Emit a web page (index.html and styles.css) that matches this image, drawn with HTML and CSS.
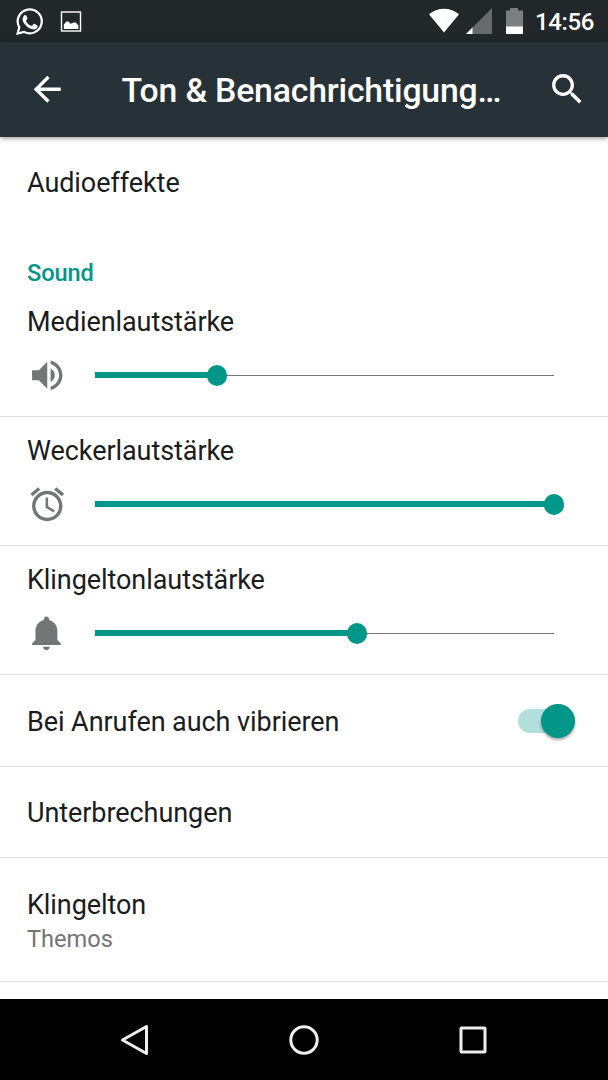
FILE: index.html
```html
<!DOCTYPE html>
<html lang="de">
<head>
<meta charset="utf-8">
<title>Ton &amp; Benachrichtigungen</title>
<link rel="stylesheet" href="styles.css">
</head>
<body>
<div class="screen">
  <div class="status-bar">
    <svg class="status-chat" viewBox="0 0 28 28" width="28" height="28">
      <path d="M1.600 25.500 3.300 19.300A12 12 0 1 1 8 23.900Z" fill="none" stroke="#fff" stroke-width="2.200"/>
      <path d="M8.500 7.300c.5-.5 1.400-.5 1.700.1l1.200 2.700c.2.6-.1 1-1.200 2.300-.3.4-.2.6 0 1 1.300 2.200 2.900 3.500 5.100 4.400.4.200.7.100 1-.2l1.300-1.500c.3-.4.600-.4 1-.2l2.600 1.300c.6.3.5 2.100-.4 3-1.400 1.300-3.300 1.500-5.300.8-3.700-1.200-6.300-3.700-8.100-6.800-1.200-2.300-1.100-4.900 1.100-6.900z" fill="#fff"/>
    </svg>
    <svg class="status-photo" viewBox="0 0 22 22" width="22" height="22">
      <rect x="1.500" y="1" width="19" height="19" fill="none" stroke="#fff" stroke-width="1.400"/>
      <path d="M3.800 18v-4.600l2.600-3h2l2.200 2.400 3.200-1.300h2l2.600 3V18z" fill="#fff"/>
    </svg>
    <div class="status-right">
      <svg viewBox="0 0 30 26" width="30" height="26"><path d="M0 6.200Q15-4.600 30 6.200L15 24.500z" fill="#fff"/></svg>
      <svg class="status-cell" viewBox="0 0 26 26" width="26" height="26"><path d="M0 26 26 0V26z" fill="#666a6c"/><path d="M0 26 6.500 19.500V26z" fill="#fff"/></svg>
      <svg class="status-battery" viewBox="0 0 17 26" width="17" height="26"><path d="M0 2.500h4V0h8v2.500h5V26H0z" fill="#7c7e80"/><path d="M0 18.500h17V26H0z" fill="#fff"/></svg>
      <span class="clock">14:56</span>
    </div>
  </div>

  <header class="app-bar">
    <svg class="icon" viewBox="0 0 24 24"><path d="M20 11H7.830l5.590-5.590L12 4l-8 8 8 8 1.410-1.410L7.830 13H20v-2z"/></svg>
    <h1 class="title">Ton &amp; Benachrichtigung…</h1>
    <svg class="icon" viewBox="0 0 24 24"><path d="M15.500 14h-.79l-.28-.27C15.410 12.590 16 11.110 16 9.500 16 5.910 13.090 3 9.500 3S3 5.910 3 9.500 5.910 16 9.500 16c1.610 0 3.090-.59 4.230-1.570l.27.28v.79l5 4.990L20.490 19l-4.990-5zm-6 0C7.010 14 5 11.990 5 9.500S7.010 5 9.500 5 14 7.010 14 9.500 11.990 14 9.500 14z"/></svg>
  </header>

  <main class="settings">
    <div class="row row-audio"><span class="label">Audioeffekte</span></div>
    <h2 class="section">Sound</h2>

    <div class="volume volume-first">
      <span class="label">Medienlautstärke</span>
      <div class="control">
        <svg class="icon" viewBox="0 0 24 24"><path d="M3 9v6h4l5 5V4L7 9H3zm13.500 3c0-1.770-1.020-3.290-2.500-4.030v8.050c1.480-.73 2.500-2.250 2.500-4.020zM14 3.230v2.060c2.890.86 5 3.540 5 6.710s-2.110 5.850-5 6.710v2.060c4.010-.91 7-4.490 7-8.770s-2.990-7.860-7-8.770z"/></svg>
        <div class="slider"><div class="fill" style="width:26.700%"></div><div class="thumb"></div><div class="rest"></div></div>
      </div>
    </div>
    <div class="volume">
      <span class="label">Weckerlautstärke</span>
      <div class="control">
        <svg class="icon" viewBox="0 0 24 24"><path d="M22 5.720l-4.600-3.860-1.290 1.530 4.600 3.860L22 5.720zM7.880 3.390L6.600 1.860 2 5.710l1.290 1.530 4.590-3.850zM12.500 8H11v6l4.750 2.850.75-1.230-4-2.370V8zM12 4c-4.970 0-9 4.030-9 9s4.020 9 9 9c4.970 0 9-4.030 9-9s-4.030-9-9-9zm0 16c-3.870 0-7-3.130-7-7s3.130-7 7-7 7 3.130 7 7-3.130 7-7 7z"/></svg>
        <div class="slider"><div class="fill" style="width:100%"></div><div class="thumb"></div><div class="rest"></div></div>
      </div>
    </div>
    <div class="volume">
      <span class="label">Klingeltonlautstärke</span>
      <div class="control">
        <svg class="icon" viewBox="0 0 24 24"><path d="M11.500 22c1.100 0 2-.9 2-2h-4c0 1.100.9 2 2 2zm6.500-6v-5.500c0-3.070-2.130-5.640-5-6.320V3.500c0-.83-.67-1.500-1.500-1.500S10 2.670 10 3.500v.68c-2.870.68-5 3.250-5 6.320V16l-2 2v1h17v-1l-2-2z"/></svg>
        <div class="slider"><div class="fill" style="width:57.100%"></div><div class="thumb"></div><div class="rest"></div></div>
      </div>
    </div>

    <div class="row row-switch">
      <span class="label">Bei Anrufen auch vibrieren</span>
      <div class="switch"><div class="knob"></div></div>
    </div>
    <div class="row row-plain"><span class="label">Unterbrechungen</span></div>
    <div class="row row-double">
      <span class="label">Klingelton</span>
      <span class="summary">Themos</span>
    </div>
  </main>

  <nav class="nav-bar">
    <svg viewBox="0 0 34 34" width="34" height="34"><path d="M4.500 17 28.500 3.500V30.500z"/></svg>
    <svg viewBox="0 0 34 34" width="34" height="34"><circle cx="17" cy="17" r="13.200"/></svg>
    <svg viewBox="0 0 34 34" width="34" height="34"><rect x="5" y="5" width="24" height="24" rx=".5"/></svg>
  </nav>
</div>
</body>
</html>
```

FILE: styles.css
```css
* { box-sizing: border-box; }
body { margin: 0; background: #fff; font-family: Roboto, "Noto Sans", sans-serif; }
svg { display: block; flex: none; }
.screen { width: 608px; height: 1080px; display: flex; flex-direction: column; overflow: hidden; }

.status-bar { height: 42px; flex: none; display: flex; align-items: flex-start; padding: 8px 14px 0 16px; background: #22272a; }
.status-photo { margin: 3px 0 0 15.500px; }
.status-right { display: flex; margin-left: auto; }
.status-cell { margin: 0 0 0 7px; }
.status-battery { margin-left: 14px; }
.clock { margin-left: 12px; font-size: 24px; line-height: 29px; letter-spacing: -.4px; font-weight: 500; color: #fff; }

.app-bar { height: 94.500px; flex: none; display: flex; align-items: center; padding: 0 21px 0 27px; background: #273238; color: #fff; box-shadow: 0 1px 5px rgba(0,0,0,.45); position: relative; z-index: 1; }
.icon { width: 40.500px; height: 40.500px; fill: currentColor; }
.title { margin: 3px auto 0 54px; font-size: 33.800px; line-height: 40px; letter-spacing: -.2px; font-weight: 500; white-space: nowrap; }

.settings { flex: 1; min-height: 0; overflow: hidden; }
.label { display: block; font-size: 27px; line-height: 32px; letter-spacing: -.07px; color: #1b1c1d; white-space: nowrap; }
.row { height: 91.500px; padding: 2px 27px 0; display: flex; align-items: center; border-bottom: 1px solid #dfdfdf; }
.row-audio { border-bottom: 0; }
.section { margin: 0; height: 71px; padding: 31px 27px 0; font-size: 23.600px; line-height: 28px; font-weight: 500; color: #009688; letter-spacing: -.1px; }
.volume { height: 129px; padding: 18px 54px 0 27px; border-bottom: 1px solid #dfdfdf; }
.volume-first { height: 118px; padding-top: 7px; }
.control { display: flex; align-items: center; height: 40.500px; margin-top: 17px; color: #737577; }
.slider { flex: 1; margin-left: 27px; display: flex; align-items: center; }
.fill { height: 6px; flex: none; background: #009688; }
.thumb { width: 20.600px; height: 20.600px; flex: none; margin: 0 -10.300px; border-radius: 50%; background: #009688; position: relative; }
.rest { height: 1px; flex: 1; background: #777; }
.row-switch { height: 92px; padding: 0 33px 0 27px; justify-content: space-between; }
.row-switch .label { margin-top: 2px; }
.row-plain { height: 91px; }
.switch { width: 57px; height: 24px; border-radius: 12px; background: #b2dfdb; display: flex; align-items: center; justify-content: flex-end; }
.knob { width: 34px; height: 34px; border-radius: 50%; background: #009688; box-shadow: 0 2px 3px rgba(0,0,0,.35); }
.row-double { height: 124px; flex-direction: column; align-items: flex-start; justify-content: flex-start; padding-top: 31px; }
.summary { font-size: 23.600px; line-height: 28px; margin-top: 4px; color: #757575; }

.nav-bar { height: 81px; flex: none; display: flex; justify-content: center; align-items: center; gap: 135px; background: #000; }
.nav-bar svg { fill: none; stroke: #eee; stroke-width: 3; stroke-linejoin: round; }
```
